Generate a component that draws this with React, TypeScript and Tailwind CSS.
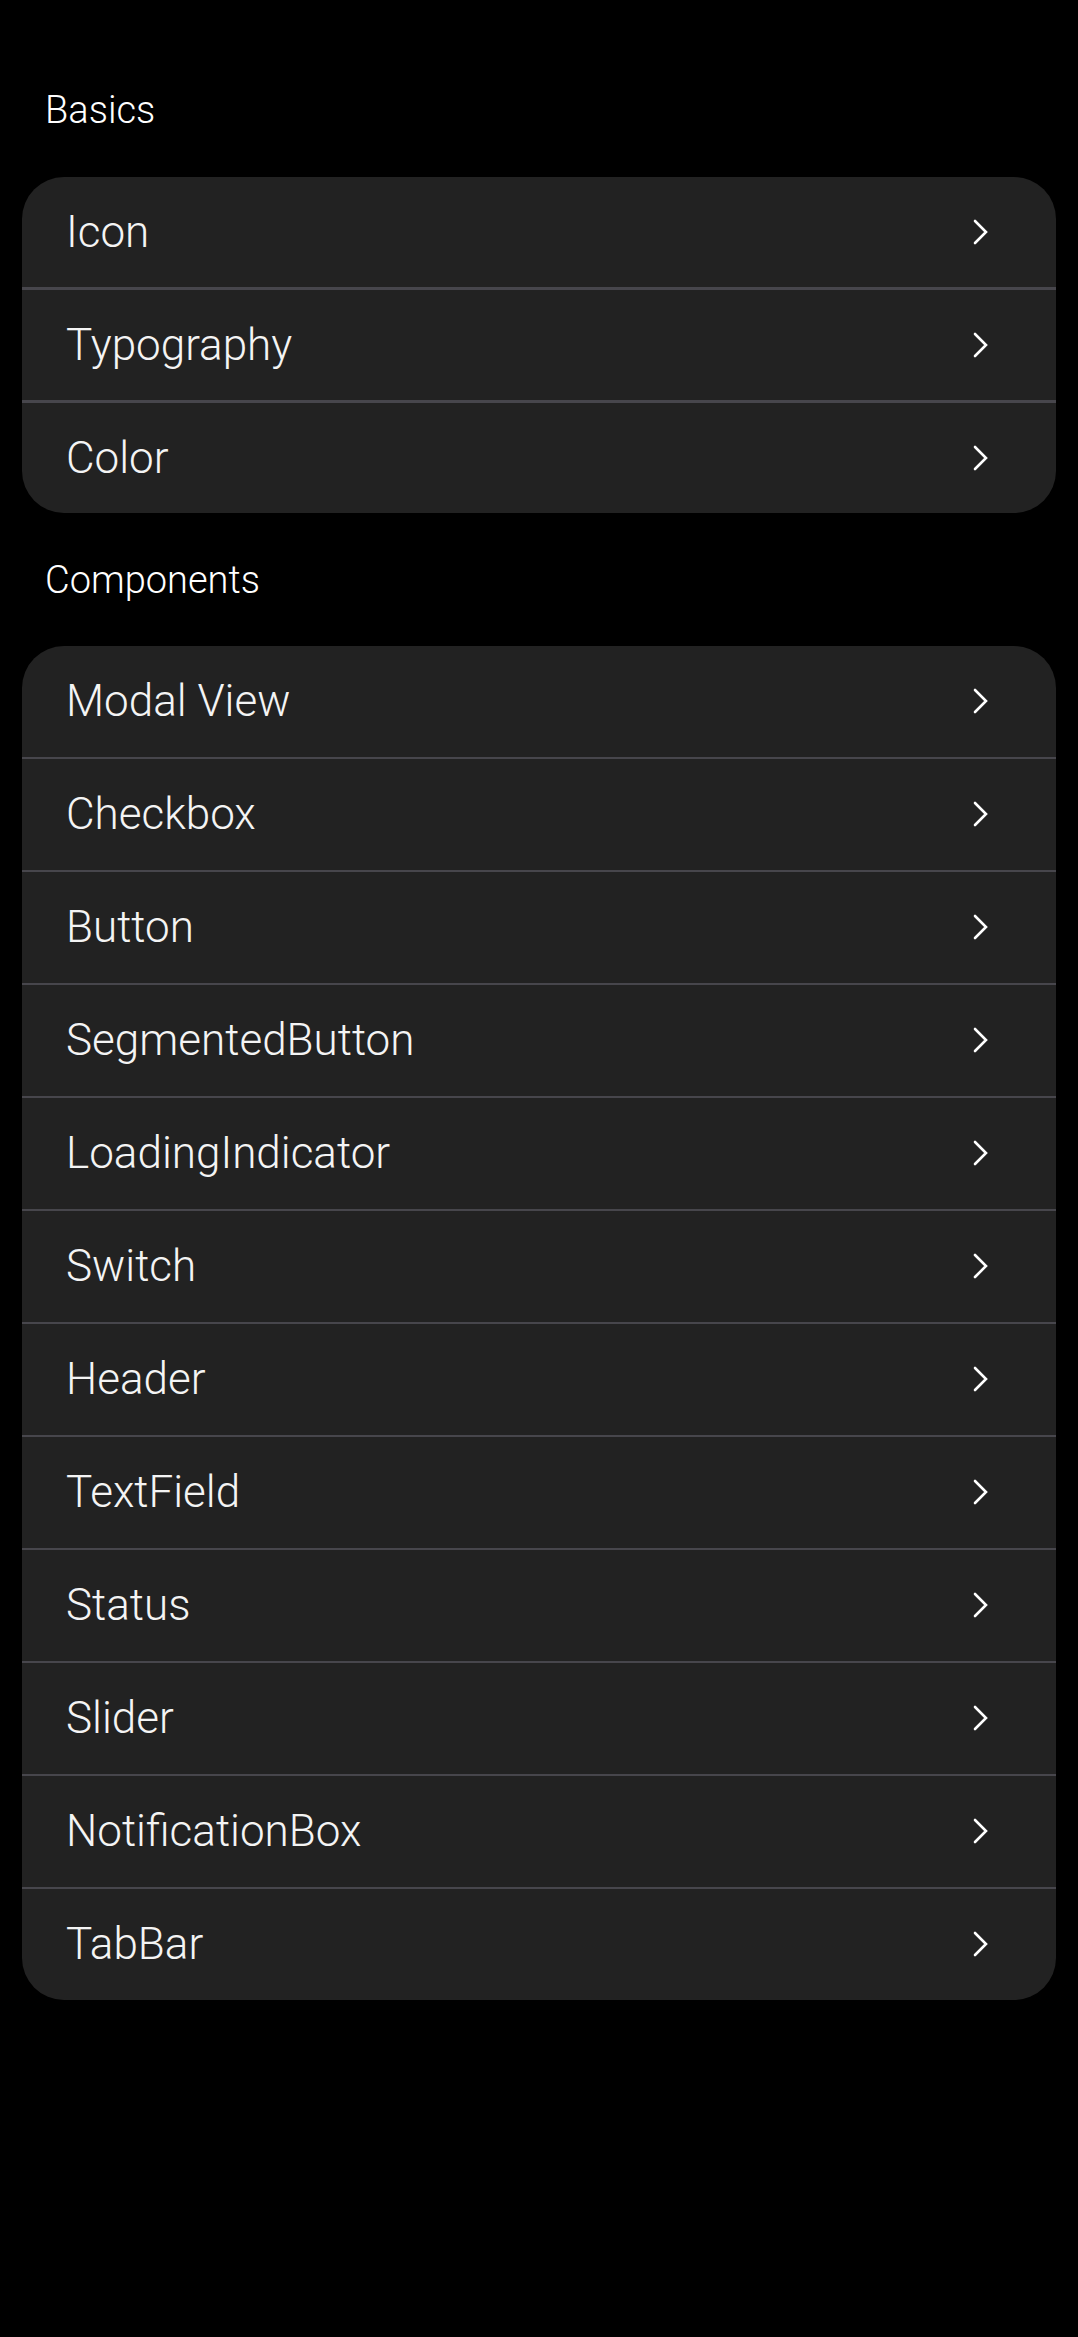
import React from "react";

const basics = ["Icon", "Typography", "Color"];
const components = [
  "Modal View",
  "Checkbox",
  "Button",
  "SegmentedButton",
  "LoadingIndicator",
  "Switch",
  "Header",
  "TextField",
  "Status",
  "Slider",
  "NotificationBox",
  "TabBar",
];

function Chevron() {
  return (
    <svg width="16" height="26" viewBox="0 0 16 26" fill="none" className="shrink-0">
      <path d="M2 2 L13 13 L2 24" stroke="#ffffff" strokeWidth="2.6" strokeLinecap="round" strokeLinejoin="miter" />
    </svg>
  );
}

function Section({ title, items }: { title: string; items: string[] }) {
  return (
    <div className="flex flex-col">
      <div className="h-[133px] flex items-center px-[45px] text-[38px] font-light text-white leading-none">
        {title}
      </div>
      <div className="mx-[22px] bg-[#222222] rounded-[42px] overflow-hidden flex flex-col">
        {items.map((it, i) => (
          <div key={it} className="flex flex-col">
            {i > 0 && <div className="h-[2.625px] bg-[#47464c]" />}
            <div className="h-[110.4px] flex items-center justify-between pl-[44px] pr-[67px]">
              <span className="text-[44px] font-light text-[#f4f4f4] leading-none">{it}</span>
              <Chevron />
            </div>
          </div>
        ))}
      </div>
    </div>
  );
}

export default function App() {
  return (
    <div
      className="min-h-screen bg-black pt-[43.7px]"
      style={{ fontFamily: "Roboto, 'Noto Sans', 'Liberation Sans', sans-serif" }}
    >
      <Section title="Basics" items={basics} />
      <Section title="Components" items={components} />
    </div>
  );
}
